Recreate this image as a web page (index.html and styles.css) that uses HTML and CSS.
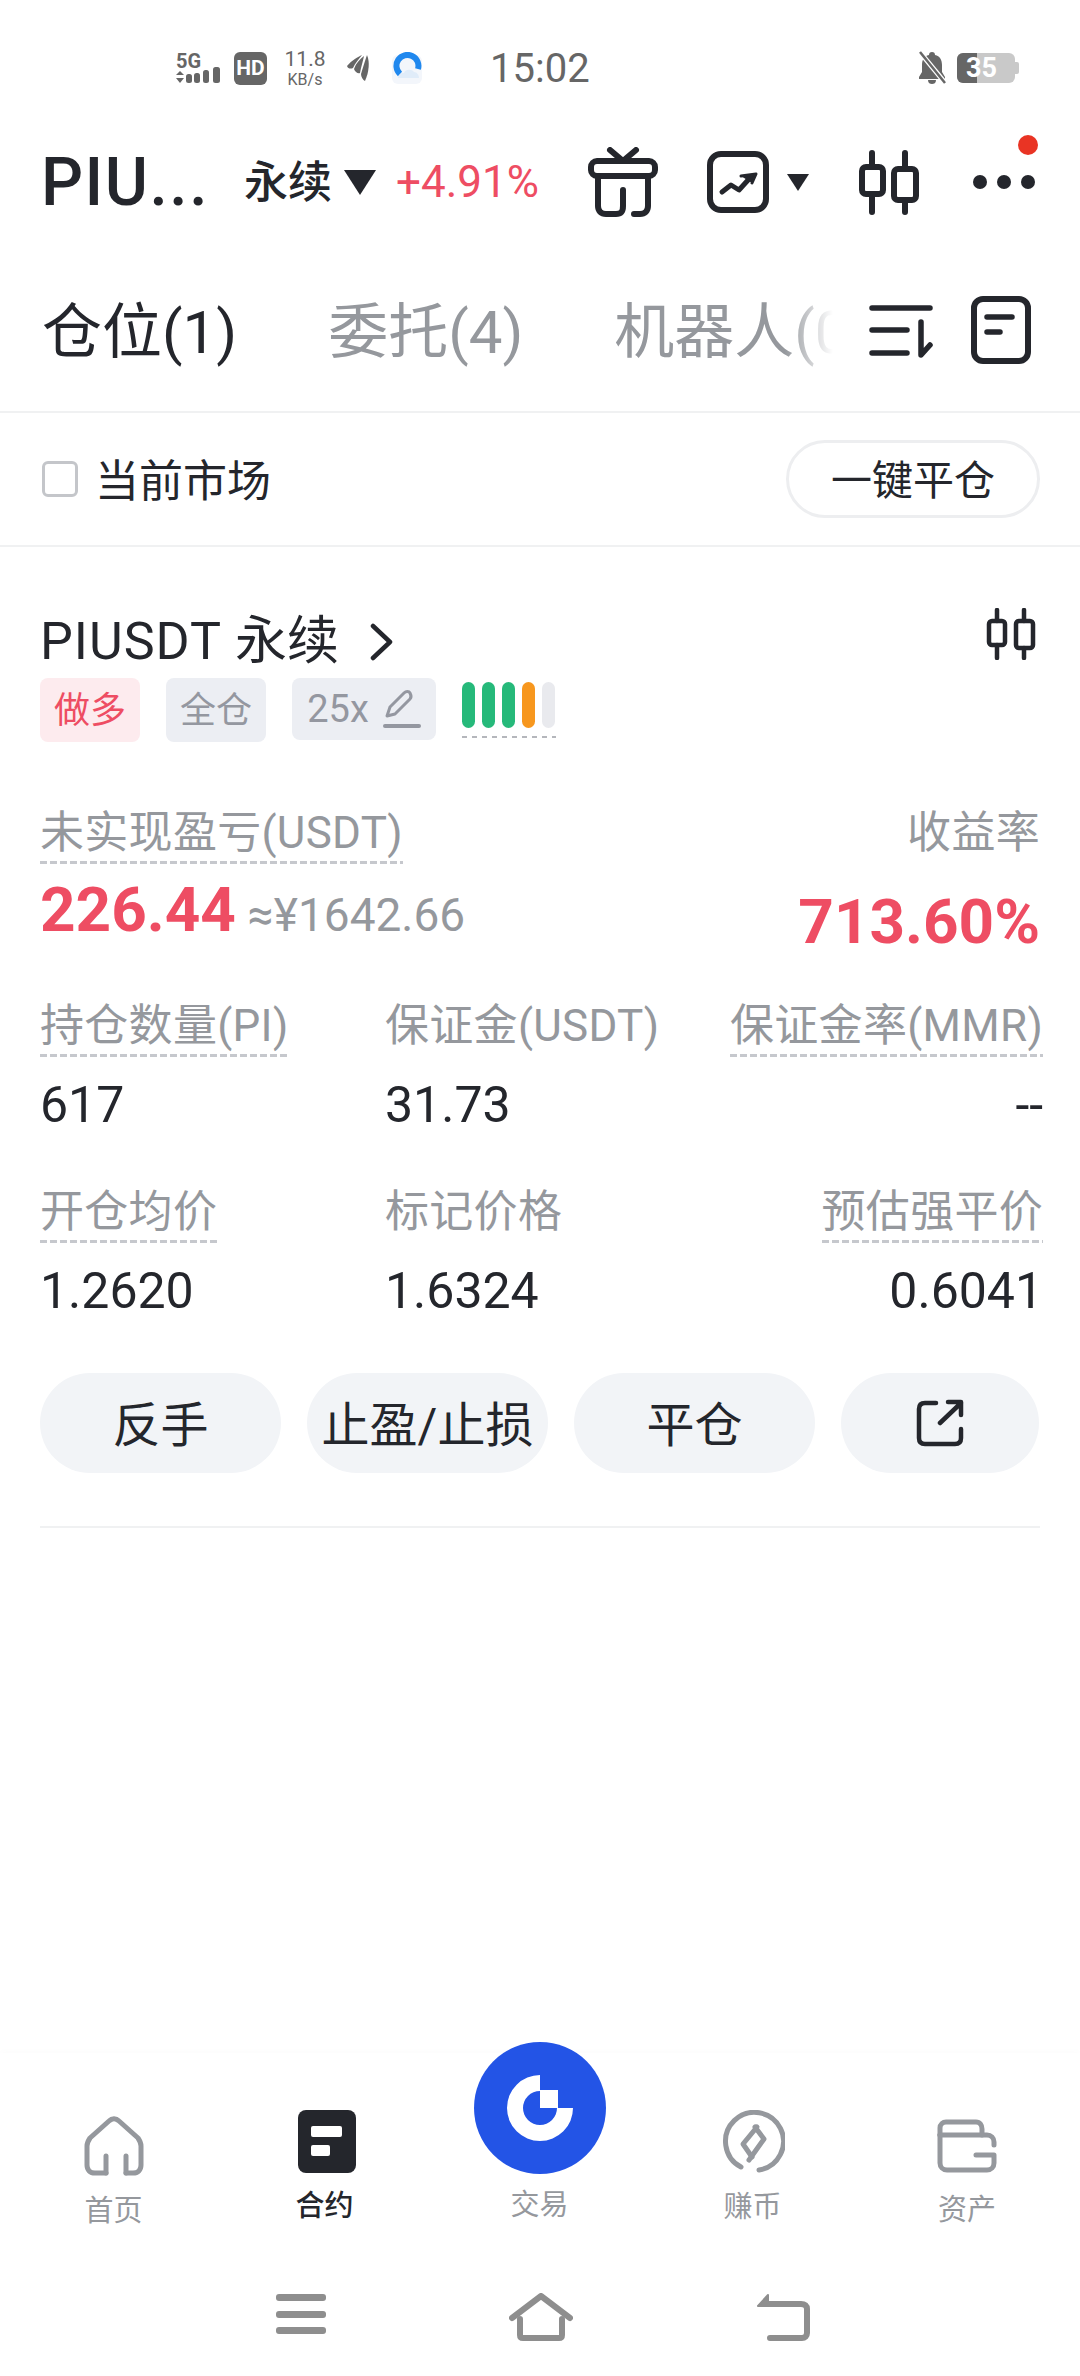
FILE: index.html
```html
<!DOCTYPE html>
<html lang="zh-CN">
<head>
<meta charset="utf-8">
<title>PIUSDT 永续</title>
<link rel="stylesheet" href="styles.css">
</head>
<body>
<div class="page">
  <div class="status">
    <svg class="st-signal" width="44" height="30" viewBox="0 0 44 30">
      <text x="0" y="15" class="st-5g">5G</text>
      <path d="M4 18l4 4H0z M4 30l4-5H0z" fill="#666"/>
      <rect x="10" y="21" width="6" height="9" rx="2.5" fill="#666"/><rect x="18" y="20" width="6" height="10" rx="2.5" fill="#666"/><rect x="27" y="17" width="6" height="13" rx="2.5" fill="#666"/><rect x="37" y="14" width="7" height="16" rx="2.5" fill="#666"/>
    </svg>
    <span class="st-hd">HD</span>
    <span class="st-speed"><span class="st-speed-a">11.8</span><span class="st-speed-b">KB/s</span></span>
    <svg class="st-feather" width="24" height="28" viewBox="0 0 24 28" fill="#666"><path d="M1 12C6 6 12 3 16 1c-3 4-7 8-9 13-2 1-5 1-6-2Z"/><path d="M8 15c2-6 6-10 10-13-1 5-3 11-4 17-2 1-5-1-6-4Z"/><path d="M15 20c2-7 4-13 6-19 3 7 2 17-2 26-2-1-4-4-4-7Z"/></svg>
    <svg class="st-cloud" width="32" height="32" viewBox="0 0 32 32"><rect x="1" y="3" width="30" height="29" rx="6" fill="#F3F6FB"/><path d="M9 22A11 11 0 1 1 27 17" fill="none" stroke="#2088EE" stroke-width="6"/><path d="M7 26c0-3 3-5 6-5 1-4 8-4 10-1 3 0 5 3 5 6Z" fill="#E0ECF9"/></svg>
    <span class="st-time">15:02</span>
    <svg class="st-bell" width="30" height="34" viewBox="0 0 30 34"><path d="M15 1c2 0 3 1 3 3 5 1 7 5 7 10v7l3 5v2H2v-2l3-5v-7c0-5 2-9 7-10 0-2 1-3 3-3Z M11 29h8c0 3-2 4-4 4s-4-1-4-4Z" fill="#666"/><path d="M2 0l27 33" stroke="#fff" stroke-width="5"/><path d="M3 1l25 31" stroke="#666" stroke-width="2.5"/></svg>
    <span class="st-batt"><span class="st-batt-fill"></span><span class="st-batt-num">35</span><span class="st-batt-cap"></span></span>
  </div>

  <header class="topbar">
    <h1 class="sym">PIU...</h1>
    <span class="kind">永续</span>
    <span class="tri-lg"></span>
    <span class="change">+4.91%</span>
    <svg class="ic-gift" width="70" height="70" viewBox="0 0 70 70" fill="none" stroke="#24262C" stroke-width="6" stroke-linecap="round" stroke-linejoin="round"><path d="M22 3l13 11L48 3"/><rect x="3" y="14" width="64" height="15" rx="6"/><path d="M10 29v30c0 5 3 8 8 8h10c5 0 7-2 7-8V43"/><path d="M60 29v30c0 5-3 8-8 8h-6"/></svg>
    <svg class="ic-chart" width="62" height="62" viewBox="0 0 62 62" fill="none" stroke="#24262C" stroke-linecap="round" stroke-linejoin="round"><rect x="3" y="3" width="56" height="56" rx="11" stroke-width="6"/><path d="M15 41l9-7 8 5 10-11" stroke-width="5"/><path d="M34 25l15-2-4 9" fill="#24262C" stroke-width="3"/></svg>
    <span class="tri-sm"></span>
    <svg class="ic-candle" width="60" height="65" viewBox="0 0 60 65" fill="none" stroke="#24262C" stroke-width="6" stroke-linecap="round" stroke-linejoin="round"><path d="M13 3v14M13 44v18M46 3v16M46 50v12"/><rect x="3" y="17" width="21" height="27" rx="4"/><rect x="35" y="19" width="22" height="31" rx="4"/></svg>
    <span class="more"><i></i><i></i><i></i><b></b></span>
  </header>

  <nav class="tabs">
    <span class="tab tab-on">仓位(1)</span>
    <span class="tab">委托(4)</span>
    <span class="tab tab-fade">机器人(0)</span>
    <svg class="ic-sort" width="64" height="54" viewBox="0 0 64 54" fill="none" stroke="#24262C" stroke-width="5.5" stroke-linecap="round" stroke-linejoin="round"><path d="M3 3h58M3 25h35M3 48h35M52 17v33l9-10"/></svg>
    <svg class="ic-doc" width="60" height="68" viewBox="0 0 60 68" fill="none" stroke="#24262C" stroke-linecap="round"><rect x="3" y="3" width="54" height="62" rx="9" stroke-width="6"/><path d="M16 21h25M16 36h13" stroke-width="5.5"/></svg>
  </nav>

  <div class="filter">
    <label class="check"><span class="box"></span><span class="check-t">当前市场</span></label>
    <span class="pill">一键平仓</span>
  </div>

  <section class="pos">
    <div class="pos-head">
      <div class="pos-title"><span class="pos-sym">PIUSDT</span><span class="pos-kind">永续</span><svg class="ic-chev" width="24" height="38" viewBox="0 0 24 38" fill="none" stroke="#24262C" stroke-width="4.5" stroke-linecap="round" stroke-linejoin="round"><path d="M4 3l17 16L4 35"/></svg></div>
      <svg class="ic-candle-sm" width="50" height="52" viewBox="0 0 50 52" fill="none" stroke="#24262C" stroke-width="4.5" stroke-linecap="round" stroke-linejoin="round"><path d="M11 2v11M11 37v13M38 2v11M38 40v10"/><rect x="3" y="13" width="16" height="24" rx="3"/><rect x="30" y="13" width="17" height="27" rx="3"/></svg>
    </div>
    <div class="tags">
      <span class="tag tag-long">做多</span>
      <span class="tag">全仓</span>
      <span class="tag tag-lev"><span>25x</span><svg width="38" height="38" viewBox="0 0 38 38" fill="none" stroke="#9497A0" stroke-linecap="round" stroke-linejoin="round"><path d="M4 26l3-9L21 3c2-2 5-2 6 0s2 4 0 6L12 24l-8 2Z" stroke-width="3"/><path d="M2 36h34" stroke-width="4"/></svg></span>
      <span class="risk"><i class="g"></i><i class="g"></i><i class="g"></i><i class="o"></i><i class="e"></i></span>
    </div>

    <div class="pnl">
      <div class="pnl-l">
        <span class="lbl dash">未实现盈亏(USDT)</span>
        <div class="pnl-v"><strong class="up big">226.44</strong><span class="cny">≈¥1642.66</span></div>
      </div>
      <div class="pnl-r">
        <span class="lbl">收益率</span>
        <strong class="up big big-r">713.60%</strong>
      </div>
    </div>

    <div class="stats">
      <div class="stat"><span class="lbl dash">持仓数量(PI)</span><span class="val">617</span></div>
      <div class="stat"><span class="lbl">保证金(USDT)</span><span class="val">31.73</span></div>
      <div class="stat stat-r"><span class="lbl dash">保证金率(MMR)</span><span class="val">--</span></div>
      <div class="stat"><span class="lbl dash">开仓均价</span><span class="val">1.2620</span></div>
      <div class="stat"><span class="lbl">标记价格</span><span class="val">1.6324</span></div>
      <div class="stat stat-r"><span class="lbl dash">预估强平价</span><span class="val">0.6041</span></div>
    </div>

    <div class="actions">
      <span class="btn">反手</span>
      <span class="btn">止盈/止损</span>
      <span class="btn">平仓</span>
      <span class="btn btn-ic"><svg width="48" height="48" viewBox="0 0 48 48" fill="none" stroke="#24262C" stroke-width="4.5" stroke-linecap="round" stroke-linejoin="round"><path d="M20 4H9C5 4 3 6 3 10v29c0 4 2 6 6 6h30c4 0 6-2 6-6V30"/><path d="M24 24L45 4M32 3h13v13"/></svg></span>
    </div>
  </section>

  <div class="spacer"></div>

  <footer class="tabbar">
    <div class="nav nav-home">
      <svg width="60" height="60" viewBox="0 0 60 60" fill="none" stroke="#95989D" stroke-width="5" stroke-linecap="round" stroke-linejoin="round"><path d="M22 57H11c-5 0-8-3-8-8V30c0-3 1-5 3-8L25 5c3-3 7-3 10 0l19 17c2 3 3 5 3 8v19c0 5-3 8-8 8h-7"/><path d="M22 57V40"/><path d="M42 40v17"/></svg>
      <span>首页</span>
    </div>
    <div class="nav nav-on">
      <svg width="58" height="63" viewBox="0 0 58 63"><rect width="58" height="63" rx="8" fill="#24262C"/><rect x="13" y="16" width="31" height="11" rx="2" fill="#fff"/><rect x="13" y="35" width="19" height="11" rx="2" fill="#fff"/></svg>
      <span>合约</span>
    </div>
    <div class="nav nav-mid">
      <svg width="132" height="132" viewBox="0 0 132 132"><circle cx="66" cy="66" r="66" fill="#2354E6"/><path fill-rule="evenodd" d="M66 33A33 33 0 1 0 99 66H83A17 17 0 1 1 66 49Z" fill="#fff"/><rect x="66" y="48" width="18" height="18" fill="#fff"/></svg>
      <span>交易</span>
    </div>
    <div class="nav nav-earn">
      <svg width="64" height="64" viewBox="0 0 64 64" fill="none" stroke="#95989D" stroke-width="5" stroke-linecap="round" stroke-linejoin="round"><path d="M20 57A29 29 0 1 1 38 60"/><path d="M36 17L22 34l9 13 "/><path d="M34 17l9 12-15 21"/></svg>
      <span>赚币</span>
    </div>
    <div class="nav nav-asset">
      <svg width="60" height="54" viewBox="0 0 60 54" fill="none" stroke="#95989D" stroke-width="5" stroke-linecap="round" stroke-linejoin="round"><path d="M3 16V9c0-4 3-6 6-6h30c4 0 6 3 6 7v6"/><path d="M3 16h47c4 0 7 3 7 7v3"/><path d="M3 16v28c0 4 3 7 7 7h40c4 0 7-3 7-7v-8H39"/></svg>
      <span>资产</span>
    </div>
  </footer>

  <div class="sysnav">
    <svg width="50" height="42" viewBox="0 0 50 42" fill="#8E8E8E"><rect y="1" width="50" height="7" rx="3"/><rect y="18" width="50" height="7" rx="3"/><rect y="34" width="50" height="7" rx="3"/></svg>
    <svg width="64" height="48" viewBox="0 0 64 48" fill="none" stroke="#8E8E8E" stroke-width="6" stroke-linejoin="round" stroke-linecap="round"><path d="M3 25L32 3l29 22"/><path d="M11 26v16c0 2 1 3 3 3h36c2 0 3-1 3-3V26"/></svg>
    <svg width="54" height="48" viewBox="0 0 54 48" fill="none" stroke="#8E8E8E" stroke-width="6" stroke-linejoin="round" stroke-linecap="round"><path d="M9 11h36c4 0 6 2 6 5v24c0 3-2 5-5 5H14"/><path d="M12 2L2 13h10z" fill="#8E8E8E" stroke-width="2"/></svg>
  </div>
</div>
</body>
</html>
```
FILE: styles.css
```css
* { box-sizing: border-box; }
html, body { margin: 0; background: #fff; }
body { font-family: Roboto, "Noto Sans CJK SC", sans-serif; color: #24262C; }
.page { width: 1080px; height: 2376px; display: flex; flex-direction: column; overflow: hidden; }

/* status bar */
.status { height: 136px; flex: none; display: flex; align-items: center; padding: 0 65px 0 176px; color: #666; }
.st-5g { font: 700 20px Roboto, sans-serif; fill: #666; }
.st-signal { flex: none; overflow: visible; }
.st-hd { margin-left: 14px; width: 33px; height: 33px; border-radius: 6px; background: #666; color: #fff; font: 700 21px/33px Roboto, sans-serif; text-align: center; flex: none; }
.st-speed { margin-left: 19px; width: 38px; display: flex; flex-direction: column; align-items: center; flex: none; line-height: 1; }
.st-speed-a { font-size: 21px; }
.st-speed-b { font-size: 16px; margin-top: 2px; }
.st-feather { margin-left: 22px; flex: none; }
.st-cloud { margin-left: 21px; flex: none; }
.st-time { margin-left: 67px; font-size: 40px; line-height: 48px; flex: none; padding-top: 2px; }
.st-bell { margin-left: auto; flex: none; }
.st-batt { margin-left: 10px; position: relative; width: 58px; height: 30px; background: #C9C9C9; border-radius: 6px; flex: none; }
.st-batt-fill { position: absolute; left: 0; top: 0; bottom: 0; width: 20px; background: #666; border-radius: 6px 0 0 6px; }
.st-batt-num { position: absolute; left: 9px; top: 0; font: 700 27px/30px Roboto, sans-serif; color: #fff; }
.st-batt-cap { position: absolute; right: -4px; top: 9px; width: 4px; height: 12px; background: #C9C9C9; border-radius: 0 2px 2px 0; }

/* top bar */
.topbar { height: 92px; flex: none; display: flex; align-items: center; padding-left: 41px; }
.sym { margin: 0; width: 203px; font-size: 66px; font-weight: 500; line-height: 72px; flex: none; letter-spacing: 1.5px; padding-top: 2px; white-space: nowrap; }
.kind { font-size: 44px; font-weight: 500; line-height: 60px; flex: none; padding-top: 2px; }
.tri-lg { margin-left: 12px; width: 0; height: 0; border-left: 16px solid transparent; border-right: 16px solid transparent; border-top: 25px solid #24262C; flex: none; }
.change { margin-left: 20px; width: 192px; font-size: 44px; line-height: 60px; color: #EE4D63; flex: none; }
.ic-gift { flex: none; }
.ic-chart { margin-left: 49px; flex: none; }
.tri-sm { margin-left: 18px; width: 0; height: 0; border-left: 11px solid transparent; border-right: 11px solid transparent; border-top: 17px solid #24262C; flex: none; }
.ic-candle { margin-left: 50px; flex: none; }
.more { margin-left: 54px; position: relative; display: flex; gap: 10px; flex: none; }
.more i { width: 14px; height: 14px; border-radius: 50%; background: #24262C; }
.more b { position: absolute; right: -3px; top: -40px; width: 20px; height: 20px; border-radius: 50%; background: #E93424; }

/* tabs */
.tabs { height: 185px; flex: none; display: flex; align-items: center; padding: 20px 0 0 42px; border-bottom: 2px solid #F0F1F2; }
.tab { font-size: 60px; line-height: 72px; color: #95989D; margin-right: 91px; margin-top: 6px; flex: none; white-space: nowrap; }
.tab-on { color: #24262C; }
.tab-fade { width: 219px; margin-right: 36px; overflow: hidden; -webkit-mask-image: linear-gradient(90deg, #000 78%, transparent 100%); mask-image: linear-gradient(90deg, #000 78%, transparent 100%); }
.ic-sort { flex: none; margin-top: 5px; }
.ic-doc { margin-left: 38px; flex: none; }

/* filter */
.filter { height: 134px; flex: none; display: flex; align-items: center; justify-content: space-between; padding: 0 40px 0 42px; border-bottom: 2px solid #F0F1F2; }
.check { display: flex; align-items: center; font-size: 44px; line-height: 60px; }
.check-t { padding-top: 5px; }
.box { width: 36px; height: 36px; border: 3px solid #C4C6CA; border-radius: 6px; margin-right: 17px; }
.pill { width: 254px; height: 78px; border: 3px solid #EDEEF0; border-radius: 39px; font-size: 41px; line-height: 76px; text-align: center; }

/* position */
.pos { padding: 0 40px; flex: none; }
.pos-head { margin-top: 59px; height: 66px; display: flex; justify-content: space-between; align-items: flex-start; }
.pos-title { font-size: 52px; line-height: 66px; display: flex; align-items: center; padding-top: 3px; white-space: nowrap; }
.pos-sym { letter-spacing: 1px; }
.pos-kind { margin-left: 13px; }
.ic-chev { margin-left: 30px; }
.ic-candle-sm { margin-top: 2px; margin-right: 4px; }
.tags { margin-top: 6px; height: 64px; display: flex; align-items: flex-start; }
.tag { height: 64px; width: 100px; margin-right: 26px; border-radius: 8px; background: #ECEEF3; color: #9497A0; font-size: 36px; line-height: 66px; text-align: center; flex: none; }
.tag-long { background: #FDEBEE; color: #EE4D63; }
.tag-lev { width: 144px; height: 62px; line-height: 62px; display: flex; align-items: center; justify-content: center; gap: 14px; font-size: 38px; }
.risk { display: flex; gap: 7px; padding-top: 4px; height: 60px; width: 94px; flex: none; background: repeating-linear-gradient(90deg, #B5B7BC 0 5px, transparent 5px 10px) left bottom / 100% 2px no-repeat; }
.risk i { width: 13px; height: 46px; border-radius: 7px; flex: none; }
.g { background: #26B97A; }
.o { background: #F7971E; }
.e { background: #E9EAEE; }

.lbl { font-size: 44px; line-height: 56px; color: #95989D; display: inline-block; white-space: nowrap; padding-bottom: 3px; letter-spacing: .3px; }
.dash { background: repeating-linear-gradient(90deg, #C6C8CD 0 7px, transparent 7px 10px) left bottom / 100% 3px no-repeat; }
.pnl { margin-top: 63px; display: flex; justify-content: space-between; }
.pnl-l, .pnl-r { display: flex; flex-direction: column; align-items: flex-start; }
.pnl-r { align-items: flex-end; }
.pnl-v { display: flex; align-items: baseline; margin-top: 11px; }
.big { font-size: 62px; line-height: 70px; font-weight: 700; }
.big-r { margin-top: 23px; }
.up { color: #EE4D63; }
.cny { margin-left: 12px; font-size: 46px; color: #95989D; }

.stats { margin-top: 41px; display: grid; grid-template-columns: 345px 345px 1fr; row-gap: 51px; }
.stat { display: flex; flex-direction: column; align-items: flex-start; }
.stat-r { align-items: flex-end; }
.val { margin-top: 20px; font-size: 50px; line-height: 56px; }

.actions { margin-top: 54px; padding-bottom: 53px; border-bottom: 2px solid #F0F1F2; display: flex; gap: 26px; }
.btn { width: 241px; height: 100px; border-radius: 50px; background: #F2F4F7; font-size: 48px; line-height: 106px; text-align: center; flex: none; white-space: nowrap; }
.btn-ic { width: 198px; display: flex; align-items: center; justify-content: center; }

.spacer { flex: 1; }

/* bottom nav */
.tabbar { height: 212px; flex: none; display: grid; grid-template-columns: repeat(5, 213px); padding-left: 7px; background: #fff; box-shadow: 0 -3px 6px rgba(0,0,0,.012); }
.nav { display: flex; flex-direction: column; align-items: center; font-size: 29px; line-height: 36px; color: #95989D; }
.nav span { display: block; }
.nav-home { padding-top: 63px; }
.nav-home span { margin-top: 17px; }
.nav-on { padding-top: 57px; color: #24262C; font-weight: 500; }
.nav-on span { margin: 15px 4px 0 0; }
.nav-mid { margin-top: -11px; }
.nav-mid span { margin-top: 13px; }
.nav-earn { padding-top: 57px; }
.nav-earn span { margin-top: 15px; }
.nav-asset { padding: 66px 0 0 3px; }
.nav-asset span { margin-top: 19px; }

.sysnav { height: 111px; flex: none; display: flex; align-items: flex-start; padding: 28px 0 0 276px; gap: 183px; }
```
